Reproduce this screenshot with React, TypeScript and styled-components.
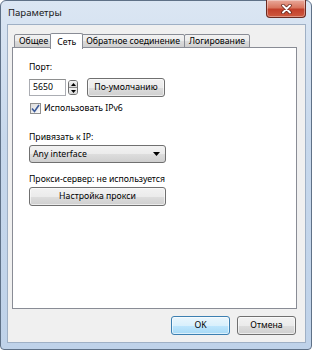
import styled, { createGlobalStyle } from 'styled-components';

const GlobalStyle = createGlobalStyle`
  html, body {
    margin: 0;
    padding: 0;
    background: #ffffff;
  }
  * {
    box-sizing: border-box;
  }
`;

const Window = styled.div`
  width: 312px;
  height: 350px;
  display: flex;
  flex-direction: column;
  border: 1px solid #5f7187;
  border-radius: 6px 6px 4px 4px;
  background: linear-gradient(180deg, #dbe6f3 0%, #c7d8ec 40%, #bfd2e9 100%);
  padding: 0 5px 6px 6px;
  font-family: 'Noto Sans', 'Open Sans', sans-serif;
  font-size: 8.7px;
  line-height: 13px;
  color: #000;
`;

const TitleBar = styled.div`
  height: 23px;
  display: flex;
  align-items: center;
  justify-content: space-between;
  padding-left: 1px;
`;

const Title = styled.span`
  font-size: 9.6px;
  color: #1a1a1a;
`;

const CloseButton = styled.div`
  align-self: flex-start;
  width: 40px;
  height: 18px;
  margin-top: -1px;
  display: flex;
  align-items: center;
  justify-content: center;
  border: 1px solid #6b2a20;
  border-top: none;
  border-radius: 0 0 4px 4px;
  background: linear-gradient(180deg, #e9a99b 0%, #d9765f 45%, #c2402b 55%, #cf5a3f 100%);
  box-shadow: inset 0 0 0 1px rgba(255, 255, 255, 0.35);
`;

const Client = styled.div`
  flex: 1;
  display: flex;
  flex-direction: column;
  background: #f0f0f0;
  border: 1px solid #9fb0c5;
  padding: 8px 8px 7px 4px;
`;

const TabStrip = styled.div`
  display: flex;
  align-items: flex-end;
  height: 15px;
  padding-left: 2px;
  position: relative;
  z-index: 1;
`;

const Tab = styled.div<{ $active?: boolean }>`
  height: ${(p) => (p.$active ? '16px' : '14px')};
  margin: ${(p) => (p.$active ? '0 -2px -1px -2px' : '0 -1px 0 0')};
  padding: ${(p) => (p.$active ? '1px 6px 0' : '0 4px')};
  display: flex;
  align-items: center;
  border: 1px solid #898c95;
  border-bottom: ${(p) => (p.$active ? 'none' : '1px solid #898c95')};
  border-radius: 2px 2px 0 0;
  background: ${(p) =>
    p.$active ? '#ffffff' : 'linear-gradient(180deg, #f2f2f2 0%, #ebebeb 50%, #dcdcdc 51%, #cfcfcf 100%)'};
  position: relative;
  z-index: ${(p) => (p.$active ? 2 : 0)};
  white-space: nowrap;
`;

const Panel = styled.div`
  flex: 1;
  background: #ffffff;
  border: 1px solid #898c95;
  margin-top: -1px;
  padding: 13px 16px;
  display: flex;
  flex-direction: column;
  align-items: flex-start;
`;

const Label = styled.div<{ $top?: number }>`
  margin-top: ${(p) => p.$top ?? 0}px;
`;

const Row = styled.div<{ $top?: number }>`
  display: flex;
  align-items: center;
  margin-top: ${(p) => p.$top ?? 0}px;
`;

const TextInput = styled.div`
  width: 37px;
  height: 17px;
  border: 1px solid #abadb3;
  border-top-color: #8e8f8f;
  background: #fff;
  padding-left: 3px;
  display: flex;
  align-items: center;
`;

const Spinner = styled.div`
  width: 10px;
  height: 15px;
  margin-left: 2px;
  display: flex;
  flex-direction: column;
  border: 1px solid #707070;
  border-radius: 3px;
  overflow: hidden;
`;

const SpinHalf = styled.div`
  flex: 1;
  display: flex;
  align-items: center;
  justify-content: center;
  background: linear-gradient(180deg, #f4f4f4, #d8d8d8);
  & + & {
    border-top: 1px solid #8a8a8a;
  }
`;

const Button = styled.div<{ $width: number; $default?: boolean; $top?: number }>`
  width: ${(p) => p.$width}px;
  height: 19px;
  margin-top: ${(p) => p.$top ?? 0}px;
  display: flex;
  align-items: center;
  justify-content: center;
  border: 1px solid ${(p) => (p.$default ? '#3c7fb1' : '#707070')};
  border-radius: 3px;
  background: ${(p) =>
    p.$default
      ? 'linear-gradient(180deg, #eaf6fd 0%, #d9f0fc 50%, #bee6fd 51%, #a7d9f5 100%)'
      : 'linear-gradient(180deg, #f2f2f2 0%, #ebebeb 50%, #dddddd 51%, #cfcfcf 100%)'};
  box-shadow: inset 0 0 0 1px rgba(255, 255, 255, 0.6);
  white-space: nowrap;
`;

const PortButton = styled(Button)`
  margin-left: 9px;
`;

const CheckBox = styled.div`
  width: 11px;
  height: 11px;
  margin: 0 3px 0 1px;
  border: 1px solid #8f8f8f;
  background: linear-gradient(135deg, #dcdcdc, #fbfbfb);
  display: flex;
  align-items: center;
  justify-content: center;
`;

const Select = styled.div`
  width: 137px;
  height: 18px;
  margin-top: 1px;
  display: flex;
  align-items: center;
  justify-content: space-between;
  padding: 0 5px 0 3px;
  border: 1px solid #707070;
  border-radius: 3px;
  background: linear-gradient(180deg, #f2f2f2 0%, #ebebeb 50%, #dddddd 51%, #cfcfcf 100%);
`;

const Footer = styled.div`
  display: flex;
  justify-content: flex-end;
  gap: 7px;
  padding-top: 7px;
  padding-right: 1px;
`;

const Arrow = ({ up }: { up?: boolean }) => (
  <svg width="5" height="3" viewBox="0 0 5 3">
    <path d={up ? 'M0 3 L2.5 0 L5 3 Z' : 'M0 0 L2.5 3 L5 0 Z'} fill="#000" />
  </svg>
);

export default function App() {
  return (
    <>
      <GlobalStyle />
      <Window>
        <TitleBar>
          <Title>Параметры</Title>
          <CloseButton>
            <svg width="11" height="10" viewBox="0 0 11 10">
              <path d="M2 1.5 L9 8.5 M9 1.5 L2 8.5" stroke="#5b1d14" strokeWidth="3.4" strokeLinecap="round" />
              <path d="M2 1.5 L9 8.5 M9 1.5 L2 8.5" stroke="#ffffff" strokeWidth="2" strokeLinecap="round" />
            </svg>
          </CloseButton>
        </TitleBar>
        <Client>
          <TabStrip>
            <Tab>Общее</Tab>
            <Tab $active>Сеть</Tab>
            <Tab>Обратное соединение</Tab>
            <Tab>Логирование</Tab>
          </TabStrip>
          <Panel>
            <Label>Порт:</Label>
            <Row $top={4}>
              <TextInput>5650</TextInput>
              <Spinner>
                <SpinHalf>
                  <Arrow up />
                </SpinHalf>
                <SpinHalf>
                  <Arrow />
                </SpinHalf>
              </Spinner>
              <PortButton $width={78}>По-умолчанию</PortButton>
            </Row>
            <Row $top={5}>
              <CheckBox>
                <svg width="9" height="9" viewBox="0 0 9 9">
                  <path d="M1 4.5 L3.5 7.5 L8 1" stroke="#3b5a9a" strokeWidth="1.6" fill="none" />
                </svg>
              </CheckBox>
              Использовать IPv6
            </Row>
            <Label $top={16}>Привязать к IP:</Label>
            <Select>
              Any interface
              <svg width="7" height="4" viewBox="0 0 7 4">
                <path d="M0 0 L3.5 4 L7 0 Z" fill="#000" />
              </svg>
            </Select>
            <Label $top={10}>Прокси-сервер: не используется</Label>
            <Button $width={137} $top={1}>
              Настройка прокси
            </Button>
          </Panel>
          <Footer>
            <Button $width={59} $default>
              OK
            </Button>
            <Button $width={59}>Отмена</Button>
          </Footer>
        </Client>
      </Window>
    </>
  );
}
